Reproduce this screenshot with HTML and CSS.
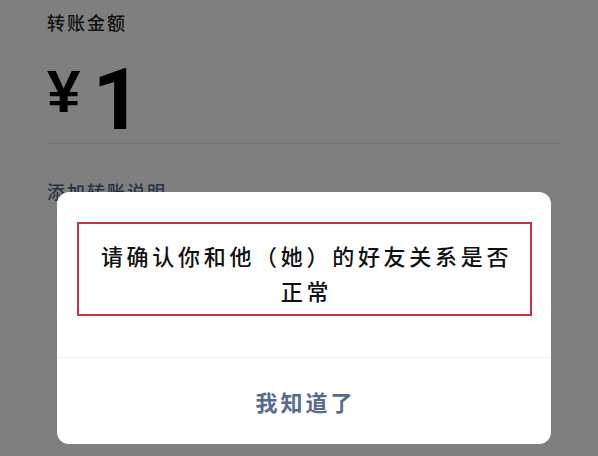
FILE: index.html
```html
<!DOCTYPE html>
<html lang="zh-CN">
<head>
<meta charset="utf-8">
<title>转账</title>
<link rel="stylesheet" href="styles.css">
</head>
<body>
<div class="page">
  <div class="label">转账金额</div>
  <div class="amount">
    <span class="yen">¥</span>
    <span class="num">1</span>
  </div>
  <div class="note">添加转账说明</div>
</div>
<div class="dialog">
  <div class="dialog-body">
    <div class="message">请确认你和他（她）的好友关系是否正常</div>
  </div>
  <div class="dialog-footer">
    <span class="btn">我知道了</span>
  </div>
</div>
</body>
</html>
```

FILE: styles.css
```css
html, body {
  margin: 0;
  padding: 0;
}
body {
  background: #7f7f7f;
  width: 598px;
  height: 456px;
  overflow: hidden;
  position: relative;
  font-family: "Noto Sans CJK SC", "Noto Sans", sans-serif;
}
.page {
  padding: 10px 38px 0 47px;
}
.label {
  font-size: 18px;
  line-height: 24px;
  letter-spacing: 2px;
  color: #111;
  font-weight: 500;
}
.amount {
  display: flex;
  align-items: flex-start;
  margin-top: 23px;
  height: 86px;
  border-bottom: 1px solid #737373;
  font-weight: bold;
  color: #000;
}
.yen {
  font-family: "Liberation Sans", Arial, sans-serif;
  font-size: 60px;
  line-height: 60px;
  margin-top: 5px;
}
.num {
  font-family: Roboto, "Liberation Sans", sans-serif;
  font-size: 86px;
  line-height: 86px;
  margin-left: 12px;
}
.note {
  margin-top: 35px;
  font-size: 18px;
  line-height: 24px;
  letter-spacing: 2px;
  color: #27324a;
  font-weight: 500;
}
.dialog {
  position: absolute;
  left: 57px;
  top: 192px;
  width: 494px;
  height: 252px;
  background: #fff;
  border-radius: 12px;
  display: flex;
  flex-direction: column;
}
.dialog-body {
  padding: 30px 19px 0 20px;
  height: 165px;
  box-sizing: border-box;
}
.message {
  height: 94px;
  box-sizing: border-box;
  border: 2px solid #c9353e;
  padding: 14px 16px 0 20px;
  text-align: center;
  font-size: 22px;
  line-height: 35px;
  letter-spacing: 3.7px;
  color: #111;
  font-weight: 500;
}
.dialog-footer {
  flex: 1;
  border-top: 1px solid #f0f0f0;
  display: flex;
  align-items: center;
  justify-content: center;
}
.btn {
  font-size: 22px;
  font-weight: bold;
  letter-spacing: 3px;
  color: #576b8e;
  margin-left: 3px;
}
```
